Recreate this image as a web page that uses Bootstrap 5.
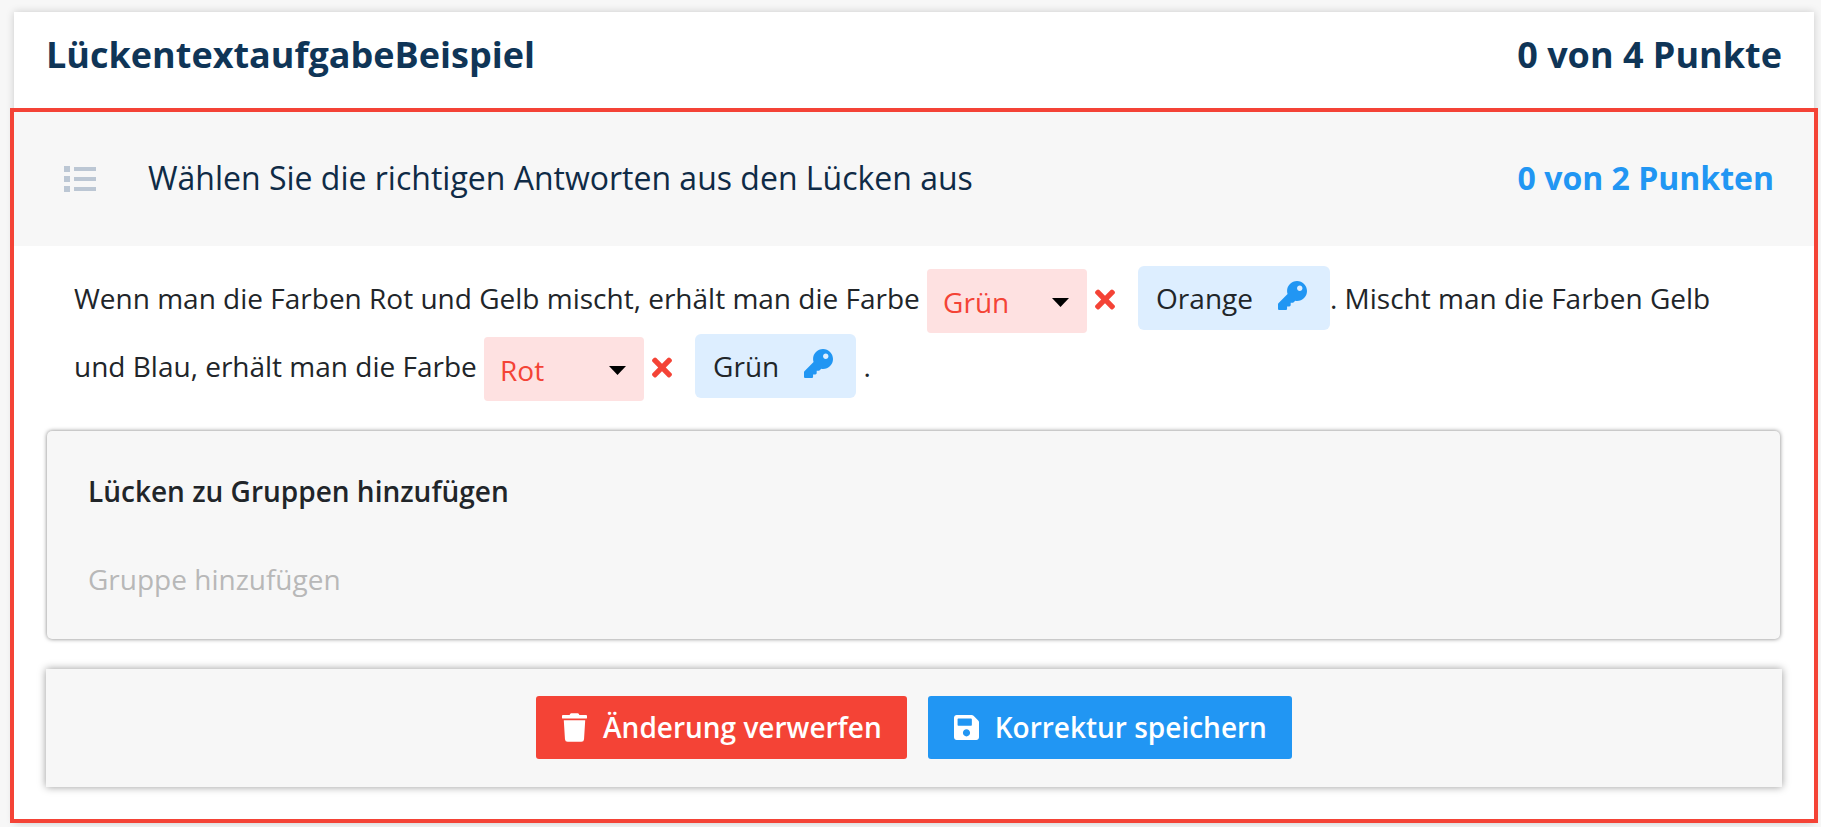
<!DOCTYPE html>
<html lang="de">
<head>
  <meta charset="UTF-8" />
  <title>LückentextaufgabeBeispiel</title>
  <link href="https://cdn.jsdelivr.net/npm/bootstrap@5.3.3/dist/css/bootstrap.min.css" rel="stylesheet">
  <style>
    html, body { height: 100%; }
    body {
      background-color: #f7f7f7;
      font-family: "Open Sans", sans-serif;
      color: #212529;
      overflow: hidden;
    }
    .page-wrap { margin: 12px 7px 0 14px; background: #fff; box-shadow: 0 0 8px rgba(0,0,0,.18); }
    .task-head { height: 96px; padding: 0 32px 10px; color: #0f3557; font-size: 36px; font-weight: 700; }
    .marked-box { margin: 0 -4px; border: 4px solid #f44336; background: #fff; height: 715px; }
    .sub-head { height: 134px; background: #f7f7f7; padding: 0 40px 2px 50px; color: #0f2b46; font-size: 32px; }
    .sub-head .list-icon { width: 32px; height: 26px; margin: 2px 52px 0 0; fill: #bcc7d4; }
    .sub-points { color: #2196f3; font-weight: 700; }
    .gap-text { margin: 0; padding: 19px 60px 0; font-size: 28px; line-height: 67px; }
    .gap-select {
      display: inline-block;
      width: 160px;
      height: 64px;
      padding: 0 16px 3px;
      vertical-align: -4px;
      border: 0;
      border-radius: 4px;
      font-size: 28px;
      color: #f44336;
      background-color: #fee1e1;
      background-image: url("data:image/svg+xml,%3Csvg xmlns='http://www.w3.org/2000/svg' width='17' height='9'%3E%3Cpath d='M0 0h17L8.5 9z'/%3E%3C/svg%3E");
      background-repeat: no-repeat;
      background-position: right 18px top 29px;
      background-size: 17px 9px;
      appearance: none;
    }
    .cross-icon { width: 20px; height: 29px; margin: 0 23px 0 8px; fill: #f44336; vertical-align: -5px; }
    .key-box {
      display: inline-flex;
      align-items: center;
      height: 64px;
      padding: 0 23px 0 18px;
      border-radius: 6px;
      background: #ddeeff;
      line-height: 1;
    }
    .key-box svg { width: 29px; height: 29px; margin: -6px 0 0 25px; fill: #2196f3; }
    .group-panel {
      height: 208px;
      margin: 30px 34px 0 33px;
      padding: 39px 41px 0;
      background: #f7f7f7;
      border-radius: 5px;
      box-shadow: 0 0 4px rgba(0,0,0,.5);
      font-size: 28px;
    }
    .group-title { font-weight: 600; margin-bottom: 46px; }
    .group-add { color: #b8b8b8; }
    .save-bar {
      height: 118px;
      margin: 30px 32px 0;
      padding-bottom: 2px;
      background: #f7f7f7;
      box-shadow: 0 0 8px rgba(0,0,0,.4);
      gap: 21px;
    }
    .save-bar .btn {
      height: 63px;
      padding: 0 25px 0 26px;
      border: 0;
      border-radius: 3px;
      color: #fff;
      font-size: 28px;
      font-weight: 600;
    }
    .btn-drop { background: #f44336; }
    .btn-keep { background: #2196f3; }
    .save-bar svg { margin-right: 16px; fill: #fff; }
    .trash-icon { width: 25px; height: 29px; }
    .disk-icon { width: 25px; height: 25px; }
  </style>
</head>
<body>
  <div class="page-wrap">
    <div class="task-head d-flex justify-content-between align-items-center">
      <span>LückentextaufgabeBeispiel</span>
      <span>0 von 4 Punkte</span>
    </div>

    <div class="marked-box">
      <div class="sub-head d-flex align-items-center">
        <svg class="list-icon" viewBox="0 0 32 26"><path d="M0 0h6v6H0zM10 1h22v4H10zM0 10h6v6H0zM10 11h22v4H10zM0 20h6v6H0zM10 21h22v4H10z"/></svg>
        <span class="flex-grow-1">Wählen Sie die richtigen Antworten aus den Lücken aus</span>
        <span class="sub-points">0 von 2 Punkten</span>
      </div>

      <p class="gap-text">Wenn man die Farben Rot und Gelb mischt, erhält man die Farbe
        <select class="gap-select"><option>Grün</option></select><svg class="cross-icon" viewBox="0 0 352 512"><path d="M242.72 256l100.07-100.07c12.28-12.28 12.28-32.19 0-44.48l-22.24-22.24c-12.28-12.28-32.19-12.28-44.48 0L176 189.28 75.93 89.21c-12.28-12.28-32.19-12.28-44.48 0L9.21 111.45c-12.28 12.28-12.28 32.19 0 44.48L109.28 256 9.21 356.07c-12.28 12.28-12.28 32.19 0 44.48l22.24 22.24c12.28 12.28 32.2 12.28 44.48 0L176 322.72l100.07 100.07c12.28 12.28 32.2 12.28 44.48 0l22.24-22.24c12.28-12.28 12.28-32.19 0-44.48L242.72 256z"/></svg><span class="key-box">Orange<svg viewBox="0 0 512 512"><path d="M512 176.001C512 273.203 433.202 352 336 352c-11.22 0-22.19-1.062-32.827-3.069l-24.012 27.014A23.999 23.999 0 0 1 261.223 384H224v40c0 13.255-10.745 24-24 24h-40v40c0 13.255-10.745 24-24 24H24c-13.255 0-24-10.745-24-24v-78.059c0-6.365 2.529-12.47 7.029-16.971l161.802-161.802C163.108 213.814 160 195.271 160 176 160 78.798 238.797.001 335.999 0 433.488-.001 512 78.511 512 176.001zM336 128c0 26.51 21.49 48 48 48s48-21.49 48-48-21.49-48-48-48-48 21.49-48 48z"/></svg></span>. Mischt man die Farben Gelb und Blau, erhält man die Farbe
        <select class="gap-select"><option>Rot</option></select><svg class="cross-icon" viewBox="0 0 352 512"><path d="M242.72 256l100.07-100.07c12.28-12.28 12.28-32.19 0-44.48l-22.24-22.24c-12.28-12.28-32.19-12.28-44.48 0L176 189.28 75.93 89.21c-12.28-12.28-32.19-12.28-44.48 0L9.21 111.45c-12.28 12.28-12.28 32.19 0 44.48L109.28 256 9.21 356.07c-12.28 12.28-12.28 32.19 0 44.48l22.24 22.24c12.28 12.28 32.2 12.28 44.48 0L176 322.72l100.07 100.07c12.28 12.28 32.2 12.28 44.48 0l22.24-22.24c12.28-12.28 12.28-32.19 0-44.48L242.72 256z"/></svg><span class="key-box">Grün<svg viewBox="0 0 512 512"><path d="M512 176.001C512 273.203 433.202 352 336 352c-11.22 0-22.19-1.062-32.827-3.069l-24.012 27.014A23.999 23.999 0 0 1 261.223 384H224v40c0 13.255-10.745 24-24 24h-40v40c0 13.255-10.745 24-24 24H24c-13.255 0-24-10.745-24-24v-78.059c0-6.365 2.529-12.47 7.029-16.971l161.802-161.802C163.108 213.814 160 195.271 160 176 160 78.798 238.797.001 335.999 0 433.488-.001 512 78.511 512 176.001zM336 128c0 26.51 21.49 48 48 48s48-21.49 48-48-21.49-48-48-48-48 21.49-48 48z"/></svg></span> .</p>

      <div class="group-panel">
        <div class="group-title">Lücken zu Gruppen hinzufügen</div>
        <div class="group-add">Gruppe hinzufügen</div>
      </div>

      <div class="save-bar d-flex justify-content-center align-items-center">
        <button class="btn btn-drop d-flex align-items-center"><svg class="trash-icon" viewBox="0 0 448 512"><path d="M432 32H312l-9.4-18.7A24 24 0 0 0 281.1 0H166.8a23.72 23.72 0 0 0-21.4 13.3L136 32H16A16 16 0 0 0 0 48v32a16 16 0 0 0 16 16h416a16 16 0 0 0 16-16V48a16 16 0 0 0-16-16zM53.2 467a48 48 0 0 0 47.9 45h245.8a48 48 0 0 0 47.9-45L416 128H32z"/></svg>Änderung verwerfen</button>
        <button class="btn btn-keep d-flex align-items-center"><svg class="disk-icon" viewBox="0 32 448 448"><path d="M433.941 129.941l-83.882-83.882A48 48 0 0 0 316.118 32H48C21.49 32 0 53.49 0 80v352c0 26.51 21.49 48 48 48h352c26.51 0 48-21.49 48-48V163.882a48 48 0 0 0-14.059-33.941zM224 416c-35.346 0-64-28.654-64-64 0-35.346 28.654-64 64-64s64 28.654 64 64c0 35.346-28.654 64-64 64zm96-304.52V212c0 6.627-5.373 12-12 12H76c-6.627 0-12-5.373-12-12V108c0-6.627 5.373-12 12-12h228.52c3.183 0 6.235 1.264 8.485 3.515l3.48 3.48A11.996 11.996 0 0 1 320 111.48z"/></svg>Korrektur speichern</button>
      </div>
    </div>
  </div>

  <script src="https://cdn.jsdelivr.net/npm/bootstrap@5.3.3/dist/js/bootstrap.bundle.min.js"></script>
</body>
</html>
